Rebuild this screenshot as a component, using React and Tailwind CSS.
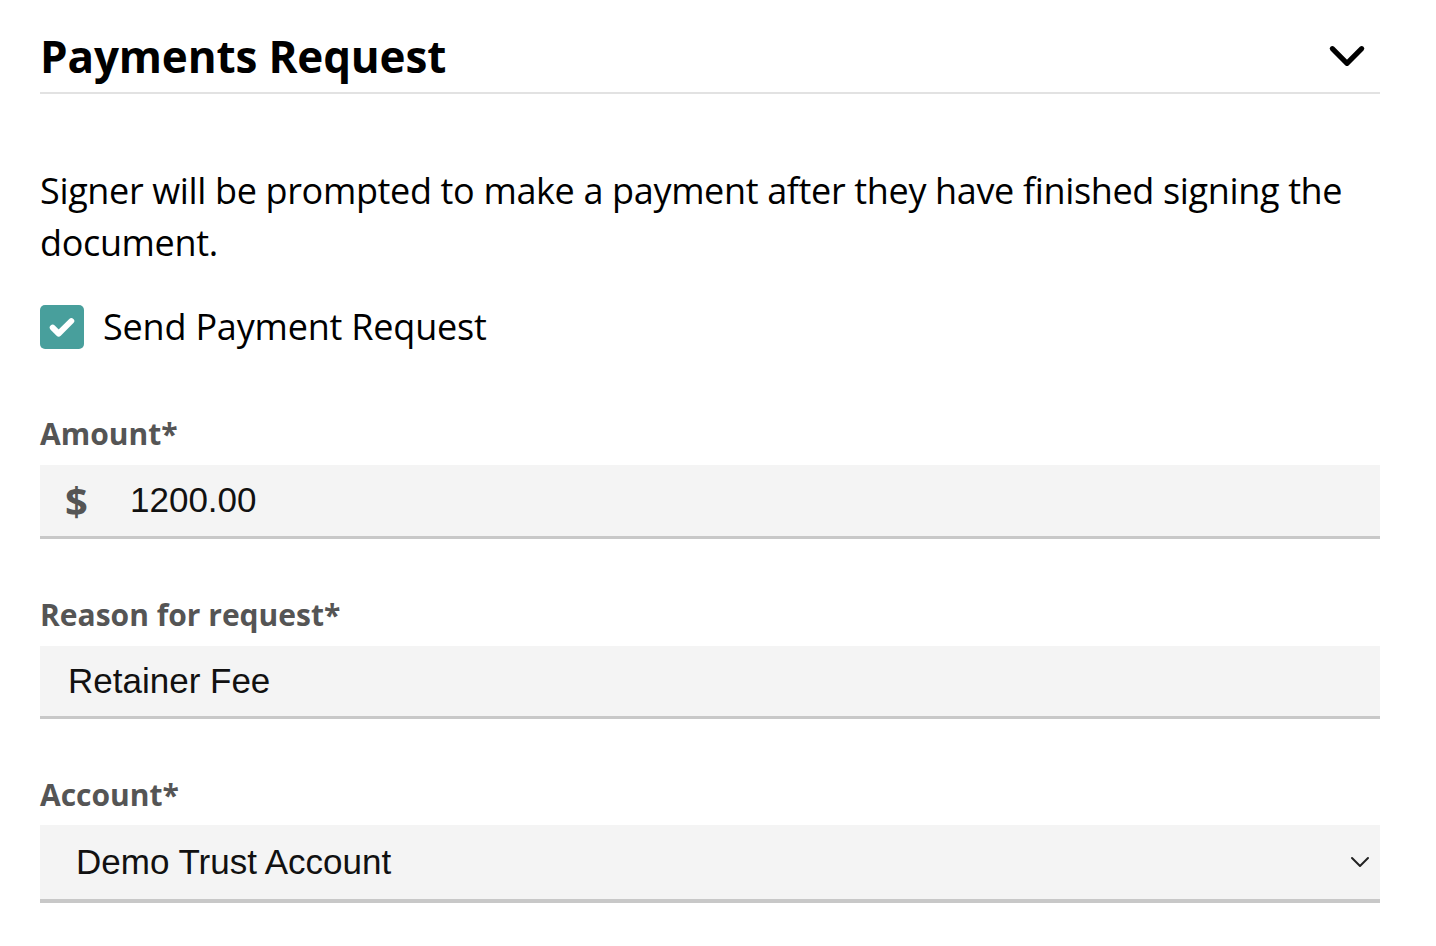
import React, { useState } from "react";

const ChevronDown = ({ className, strokeWidth = 2 }) => (
  <svg viewBox="0 0 24 24" fill="none" stroke="currentColor" strokeWidth={strokeWidth} strokeLinecap="round" strokeLinejoin="round" className={className}>
    <path d="M4 8l8 8 8-8" />
  </svg>
);

const App = () => {
  const [checked, setChecked] = useState(true);
  const [amount, setAmount] = useState("1200.00");
  const [reason, setReason] = useState("Retainer Fee");

  return (
    <div className="w-[1436px] h-[946px] bg-white pl-10 pr-14 pt-[26px] font-['Open_Sans',sans-serif] text-black">
      <div className="flex items-center justify-between border-b-2 border-[#e2e2e2] pb-[6px] pr-[11px]">
        <h2 className="text-[44px] leading-[60px] font-bold tracking-[-0.15px]">Payments Request</h2>
        <ChevronDown className="w-[44px] h-[44px]" strokeWidth={2.8} />
      </div>

      <p className="mt-[71px] text-[36px] leading-[52px] tracking-[-0.35px]">
        Signer will be prompted to make a payment after they have finished signing the document.
      </p>

      <label className="mt-[34px] flex items-center gap-[19px] cursor-pointer">
        <span
          onClick={() => setChecked(!checked)}
          className={`w-[44px] h-[44px] rounded-[5px] flex items-center justify-center ${checked ? "bg-[#489f9c]" : "bg-white border-2 border-gray-400"}`}
        >
          {checked && (
            <svg viewBox="0 0 24 24" className="w-[32px] h-[32px]" fill="none" stroke="white" strokeWidth={4.4} strokeLinecap="round" strokeLinejoin="round">
              <path d="M5 12.5l4.5 4.5L19 7.5" />
            </svg>
          )}
        </span>
        <span className="text-[36px] leading-[48px] tracking-[-0.2px]">Send Payment Request</span>
      </label>

      <div className="mt-[63px]">
        <div className="text-[30px] leading-[40px] font-bold text-[#555555]">Amount*</div>
        <div className="mt-[11px] h-[74px] bg-[#f4f4f4] border-b-[3px] border-[#c8c8c8] flex items-center">
          <span className="pl-[25px] w-[90px] text-[40px] leading-none font-bold text-[#555555]">$</span>
          <input
            value={amount}
            onChange={(e) => setAmount(e.target.value)}
            className="flex-1 bg-transparent outline-none text-[35px] font-['Liberation_Sans',Arial,sans-serif] text-[#111]"
          />
        </div>
      </div>

      <div className="mt-[56px]">
        <div className="text-[30px] leading-[40px] font-bold text-[#555555]">Reason for request*</div>
        <div className="mt-[11px] h-[73px] bg-[#f4f4f4] border-b-[3px] border-[#c8c8c8] flex items-center">
          <input
            value={reason}
            onChange={(e) => setReason(e.target.value)}
            className="flex-1 pl-[28px] bg-transparent outline-none text-[35px] font-['Liberation_Sans',Arial,sans-serif] text-[#111]"
          />
        </div>
      </div>

      <div className="mt-[56px]">
        <div className="text-[30px] leading-[40px] font-bold text-[#555555]">Account*</div>
        <div className="mt-[10px] h-[78px] bg-[#f4f4f4] border-b-[4px] border-[#c8c8c8] flex items-center justify-between pl-[36px] pr-[8px]">
          <span className="text-[35px] font-['Liberation_Sans',Arial,sans-serif] text-[#111]">Demo Trust Account</span>
          <ChevronDown className="w-[24px] h-[24px] text-[#222]" strokeWidth={2} />
        </div>
      </div>
    </div>
  );
};

export default App;
